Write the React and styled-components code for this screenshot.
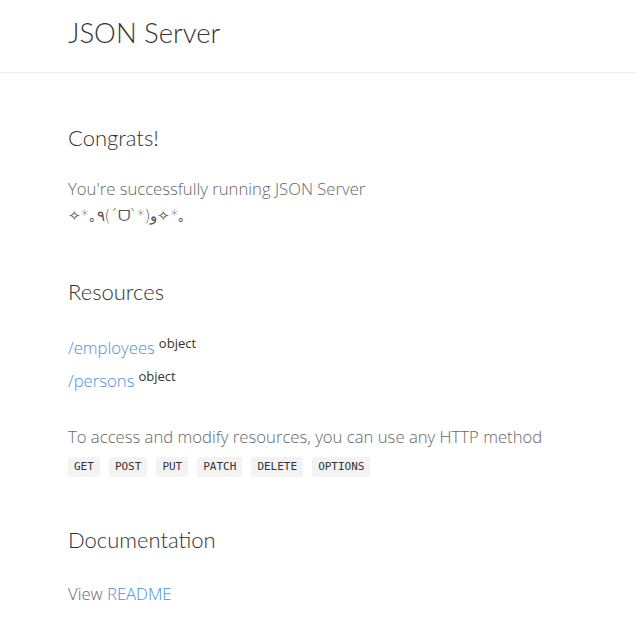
import styled, { createGlobalStyle } from "styled-components";

const GlobalStyle = createGlobalStyle`
  html, body {
    margin: 0;
    padding: 0;
    background: #fff;
  }
  body {
    font-family: "Open Sans", "Noto Sans", "DejaVu Sans", sans-serif;
    font-weight: 300;
    color: #666;
  }
`;

const Header = styled.header`
  height: 72px;
  border-bottom: 1px solid #eee;
  display: flex;
  align-items: center;
  padding-left: 68px;
`;

const Title = styled.div`
  font-family: "Lato", sans-serif;
  font-size: 27.5px;
  color: #333;
  font-weight: 300;
  margin-top: -7px;
`;

const Main = styled.main`
  padding: 46px 68px 0;
`;

const Section = styled.section`
  margin-bottom: ${(props) => props.gap || "36px"};
`;

const Heading = styled.h2`
  margin: 0 0 ${(props) => props.space || "19px"};
  font-family: "Lato", sans-serif;
  font-size: 22px;
  font-weight: 300;
  color: #333;
  line-height: 38px;
`;

const Text = styled.p`
  margin: 0;
  font-size: 16.7px;
  line-height: 26px;
  color: #666;
`;

const Kaomoji = styled.span`
  font-family: "DejaVu Sans", sans-serif;
  font-size: 15px;
  color: #555;
`;

const ResourceList = styled.ul`
  list-style: none;
  margin: 0 0 29px;
  padding: 0;
  display: flex;
  flex-direction: column;
  gap: 2px;
`;

const Link = styled.a`
  color: #4a90e2;
  text-decoration: none;
  font-size: 16.7px;
`;

const Sup = styled.sup`
  font-size: 13px;
  font-weight: 400;
  color: #333;
  margin-left: 4px;
`;

const Item = styled.li`
  line-height: 26px;
`;

const Methods = styled.div`
  display: flex;
  gap: 9px;
  margin-top: 7px;
`;

const Code = styled.code`
  font-family: "DejaVu Sans Mono", "Liberation Mono", monospace;
  font-size: 11px;
  font-weight: 400;
  color: #333;
  background: #f3f3f3;
  padding: 3px 6px;
  line-height: 14px;
  border-radius: 2px;
`;

const methods = ["GET", "POST", "PUT", "PATCH", "DELETE", "OPTIONS"];

export default function App() {
  return (
    <>
      <GlobalStyle />
      <Header>
        <Title>JSON Server</Title>
      </Header>
      <Main>
        <Section gap="44px">
          <Heading>Congrats!</Heading>
          <Text>You're successfully running JSON Server</Text>
          <Text>
            <Kaomoji>✧*｡٩(ˊᗜˋ*)و✧*｡</Kaomoji>
          </Text>
        </Section>
        <Section gap="44px">
          <Heading>Resources</Heading>
          <ResourceList>
            <Item>
              <Link href="#">/employees</Link>
              <Sup>object</Sup>
            </Item>
            <Item>
              <Link href="#">/persons</Link>
              <Sup>object</Sup>
            </Item>
          </ResourceList>
          <Text>To access and modify resources, you can use any HTTP method</Text>
          <Methods>
            {methods.map((m) => (
              <Code key={m}>{m}</Code>
            ))}
          </Methods>
        </Section>
        <Section>
          <Heading space="22px">Documentation</Heading>
          <Text>
            View <Link href="#">README</Link>
          </Text>
        </Section>
      </Main>
    </>
  );
}
